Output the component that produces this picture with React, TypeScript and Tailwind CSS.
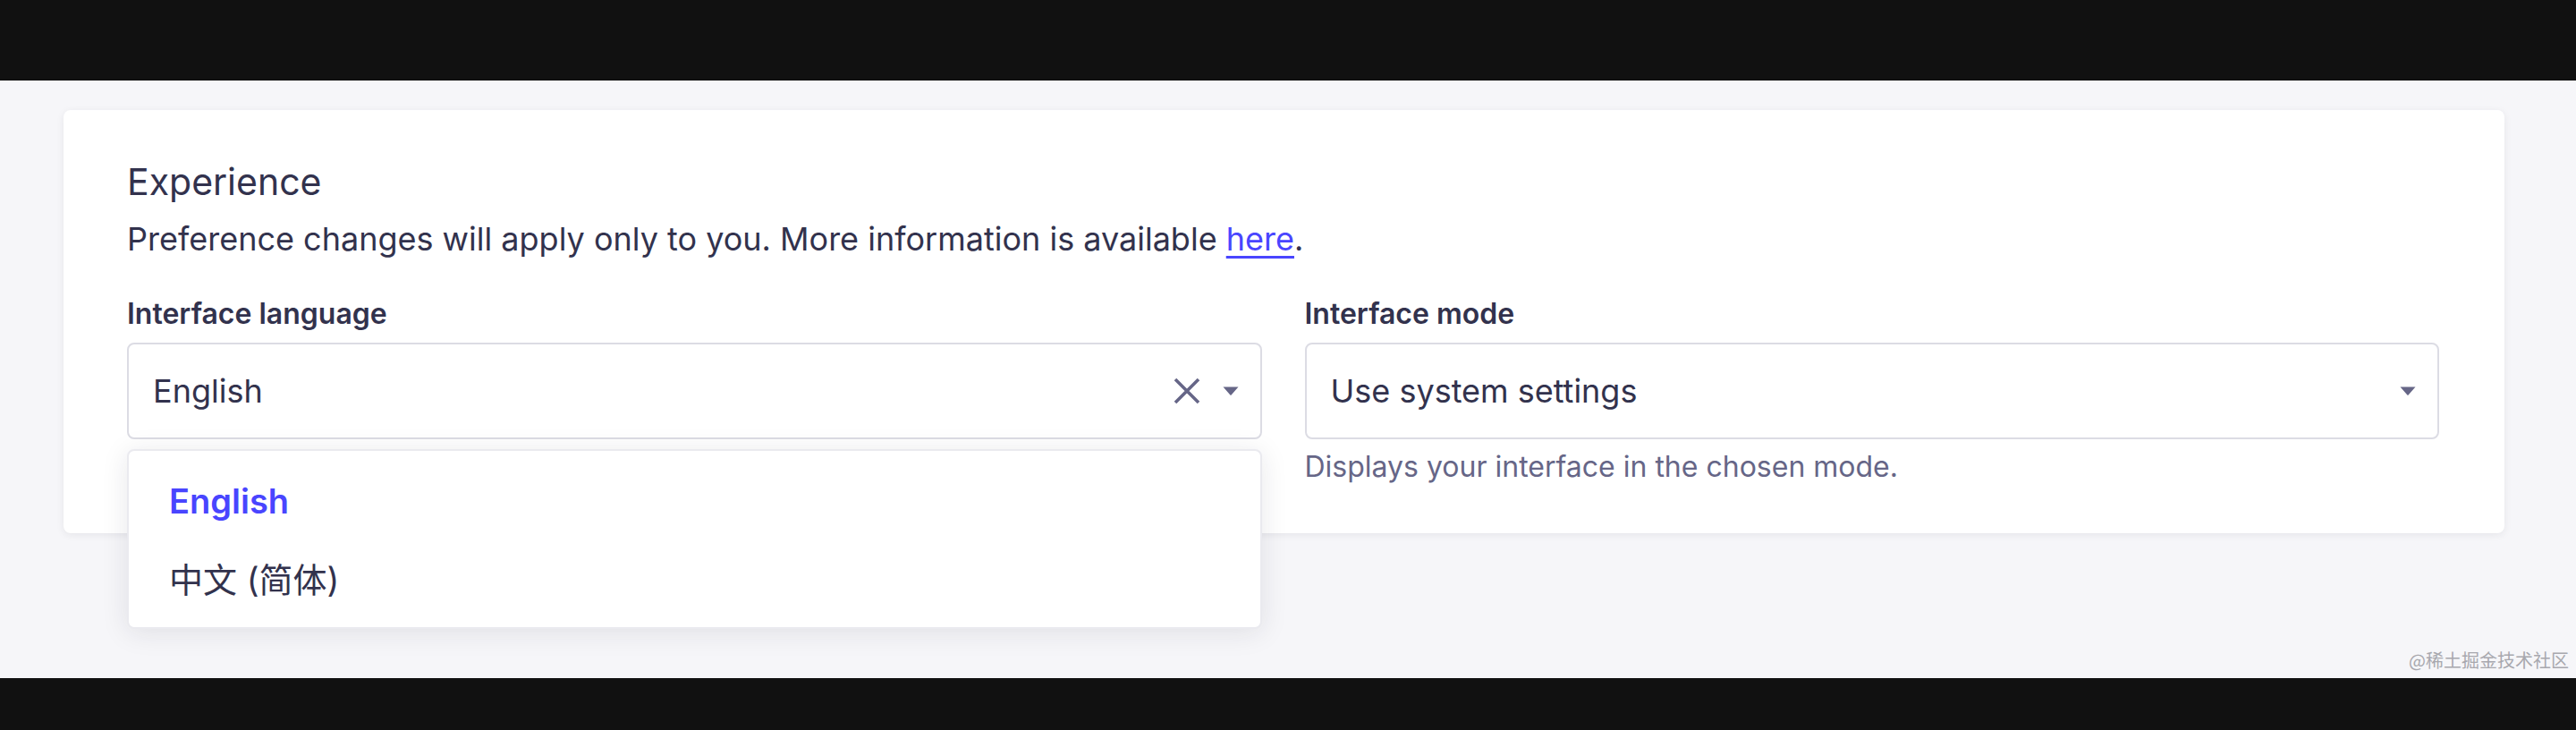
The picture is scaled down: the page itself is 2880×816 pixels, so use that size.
import { useState } from 'react';

const XIcon = () => (
    <svg width="30" height="30" viewBox="0 0 30 30" fill="none">
        <path d="M2 2 28 28M28 2 2 28" stroke="#666687" strokeWidth="3.6" />
    </svg>
);

const Caret = () => (
    <svg width="18" height="10" viewBox="0 0 18 10">
        <path d="M0.5 0.5h17L9.6 9.4a0.8 0.8 0 0 1-1.2 0z" fill="#666687" />
    </svg>
);

const languages = ['English', '中文 (简体)'];

export default function App() {
    const [lang] = useState('English');

    return (
        <div className="w-[2880px] h-[816px] flex flex-col bg-[#111111] font-['Inter','Noto_Sans_CJK_SC',sans-serif] text-[#32324d] overflow-hidden">
            {/* top bar */}
            <div className="h-[90px] shrink-0" />

            {/* page */}
            <div className="relative h-[668px] shrink-0 bg-[#f6f6f9] pt-[33px] pl-[71px]">
                <section className="w-[2729px] h-[473px] bg-white rounded-[8px] shadow-[0_2px_8px_rgba(33,33,52,0.08)] pt-[56px] pl-[71px] pr-[73px]">
                    <h2 className="text-[41px] leading-[48px] font-normal">Experience</h2>
                    <p className="mt-[18px] text-[36px] leading-[44px]">
                        Preference changes will apply only to you. More information is available{' '}
                        <a href="#" className="text-[#4945ff] underline decoration-[3px] underline-offset-[6px]">here</a>.
                    </p>

                    <div className="mt-[42px] grid grid-cols-2 gap-[48px]">
                        {/* language */}
                        <div className="relative">
                            <label className="block text-[32px] leading-[40px] font-semibold">Interface language</label>
                            <div className="mt-[12px] h-[108px] border-2 border-[#dcdce4] rounded-[8px] pl-[27px] pr-[24px] flex items-center">
                                <span className="flex-1 text-[36px] leading-[44px]">{lang}</span>
                                <XIcon />
                                <span className="ml-[25px] flex"><Caret /></span>
                            </div>

                            {/* open menu */}
                            <ul className="absolute left-0 right-0 top-[171px] z-10 h-[201px] bg-white border-2 border-[#eaeaef] rounded-[8px] shadow-[0_4px_30px_rgba(33,33,52,0.1)] py-[12px]">
                                {languages.map((l) => (
                                    <li
                                        key={l}
                                        className={
                                            l === lang
                                                ? 'h-[88px] flex items-center pl-[45px] text-[38px] font-semibold text-[#4945ff]'
                                                : 'h-[88px] flex items-center pl-[45px] text-[38px] text-[#32324d]'
                                        }
                                    >
                                        {l}
                                    </li>
                                ))}
                            </ul>
                        </div>

                        {/* mode */}
                        <div>
                            <label className="block text-[32px] leading-[40px] font-semibold">Interface mode</label>
                            <div className="mt-[12px] h-[108px] border-2 border-[#dcdce4] rounded-[8px] pl-[27px] pr-[24px] flex items-center">
                                <span className="flex-1 text-[36px] leading-[44px]">Use system settings</span>
                                <Caret />
                            </div>
                            <p className="mt-[11px] text-[32px] leading-[40px] text-[#666687]">
                                Displays your interface in the chosen mode.
                            </p>
                        </div>
                    </div>
                </section>

                <span className="absolute right-[8px] bottom-[8px] text-[20px] leading-[24px] text-[#a8a8ae] font-['Noto_Sans_CJK_SC',sans-serif]">
                    @稀土掘金技术社区
                </span>
            </div>

            {/* bottom bar */}
            <div className="flex-1" />
        </div>
    );
}
